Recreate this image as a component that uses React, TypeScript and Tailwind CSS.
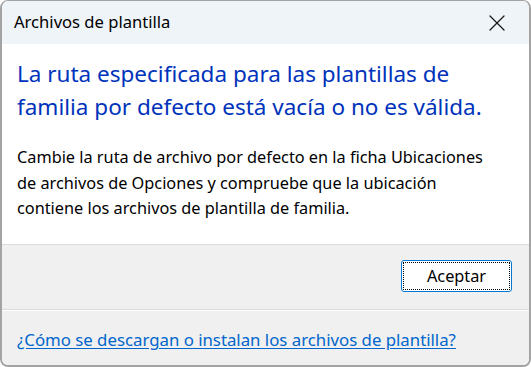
import { X } from 'lucide-react';

const font = { fontFamily: '"Noto Sans", "Open Sans", sans-serif' };

export default function App() {
  return (
    <div className="w-[531px] h-[367px] bg-white" style={font}>
      <div className="w-full h-full flex flex-col rounded-[8px] border-2 border-t border-[#a3a3a3] overflow-hidden">
        {/* title bar */}
        <div className="h-[43px] shrink-0 bg-[#eff4f9] flex items-center justify-between pl-[12px] pr-[18px]">
          <span className="text-[16.6px] text-black">Archivos de plantilla</span>
          <X className="w-[28px] h-[28px] text-[#1a1a1a]" strokeWidth={1.1} />
        </div>

        {/* main content */}
        <div className="h-[201px] shrink-0 bg-white border-b border-[#dcdcdc] px-[15px] pt-[13px]">
          <h1 className="text-[22.5px] leading-[33px] text-[#0033bb]">
            La ruta especificada para las plantillas de
            <br />
            familia por defecto está vacía o no es válida.
          </h1>
          <p className="mt-[22px] text-[16.3px] leading-[25.5px] text-black">
            Cambie la ruta de archivo por defecto en la ficha Ubicaciones
            <br />
            de archivos de Opciones y compruebe que la ubicación
            <br />
            contiene los archivos de plantilla de familia.
          </p>
        </div>

        {/* buttons */}
        <div className="h-[65px] shrink-0 bg-[#f0f0f0] border-b border-[#dcdcdc] flex items-start justify-end pt-[15px] pr-[17px]">
          <button className="w-[111px] h-[32px] rounded-[3px] border border-[#0078d7] bg-white p-[1px]">
            <div className="w-full h-full border border-dotted border-black flex items-center justify-center text-[16.3px] text-black">
              Aceptar
            </div>
          </button>
        </div>

        {/* footer */}
        <div className="flex-1 bg-[#f0f0f0] border-t border-white px-[15px] pt-[16px]">
          <a href="#" className="text-[16.8px] text-[#0066cc] underline underline-offset-2">
            ¿Cómo se descargan o instalan los archivos de plantilla?
          </a>
        </div>
      </div>
    </div>
  );
}
